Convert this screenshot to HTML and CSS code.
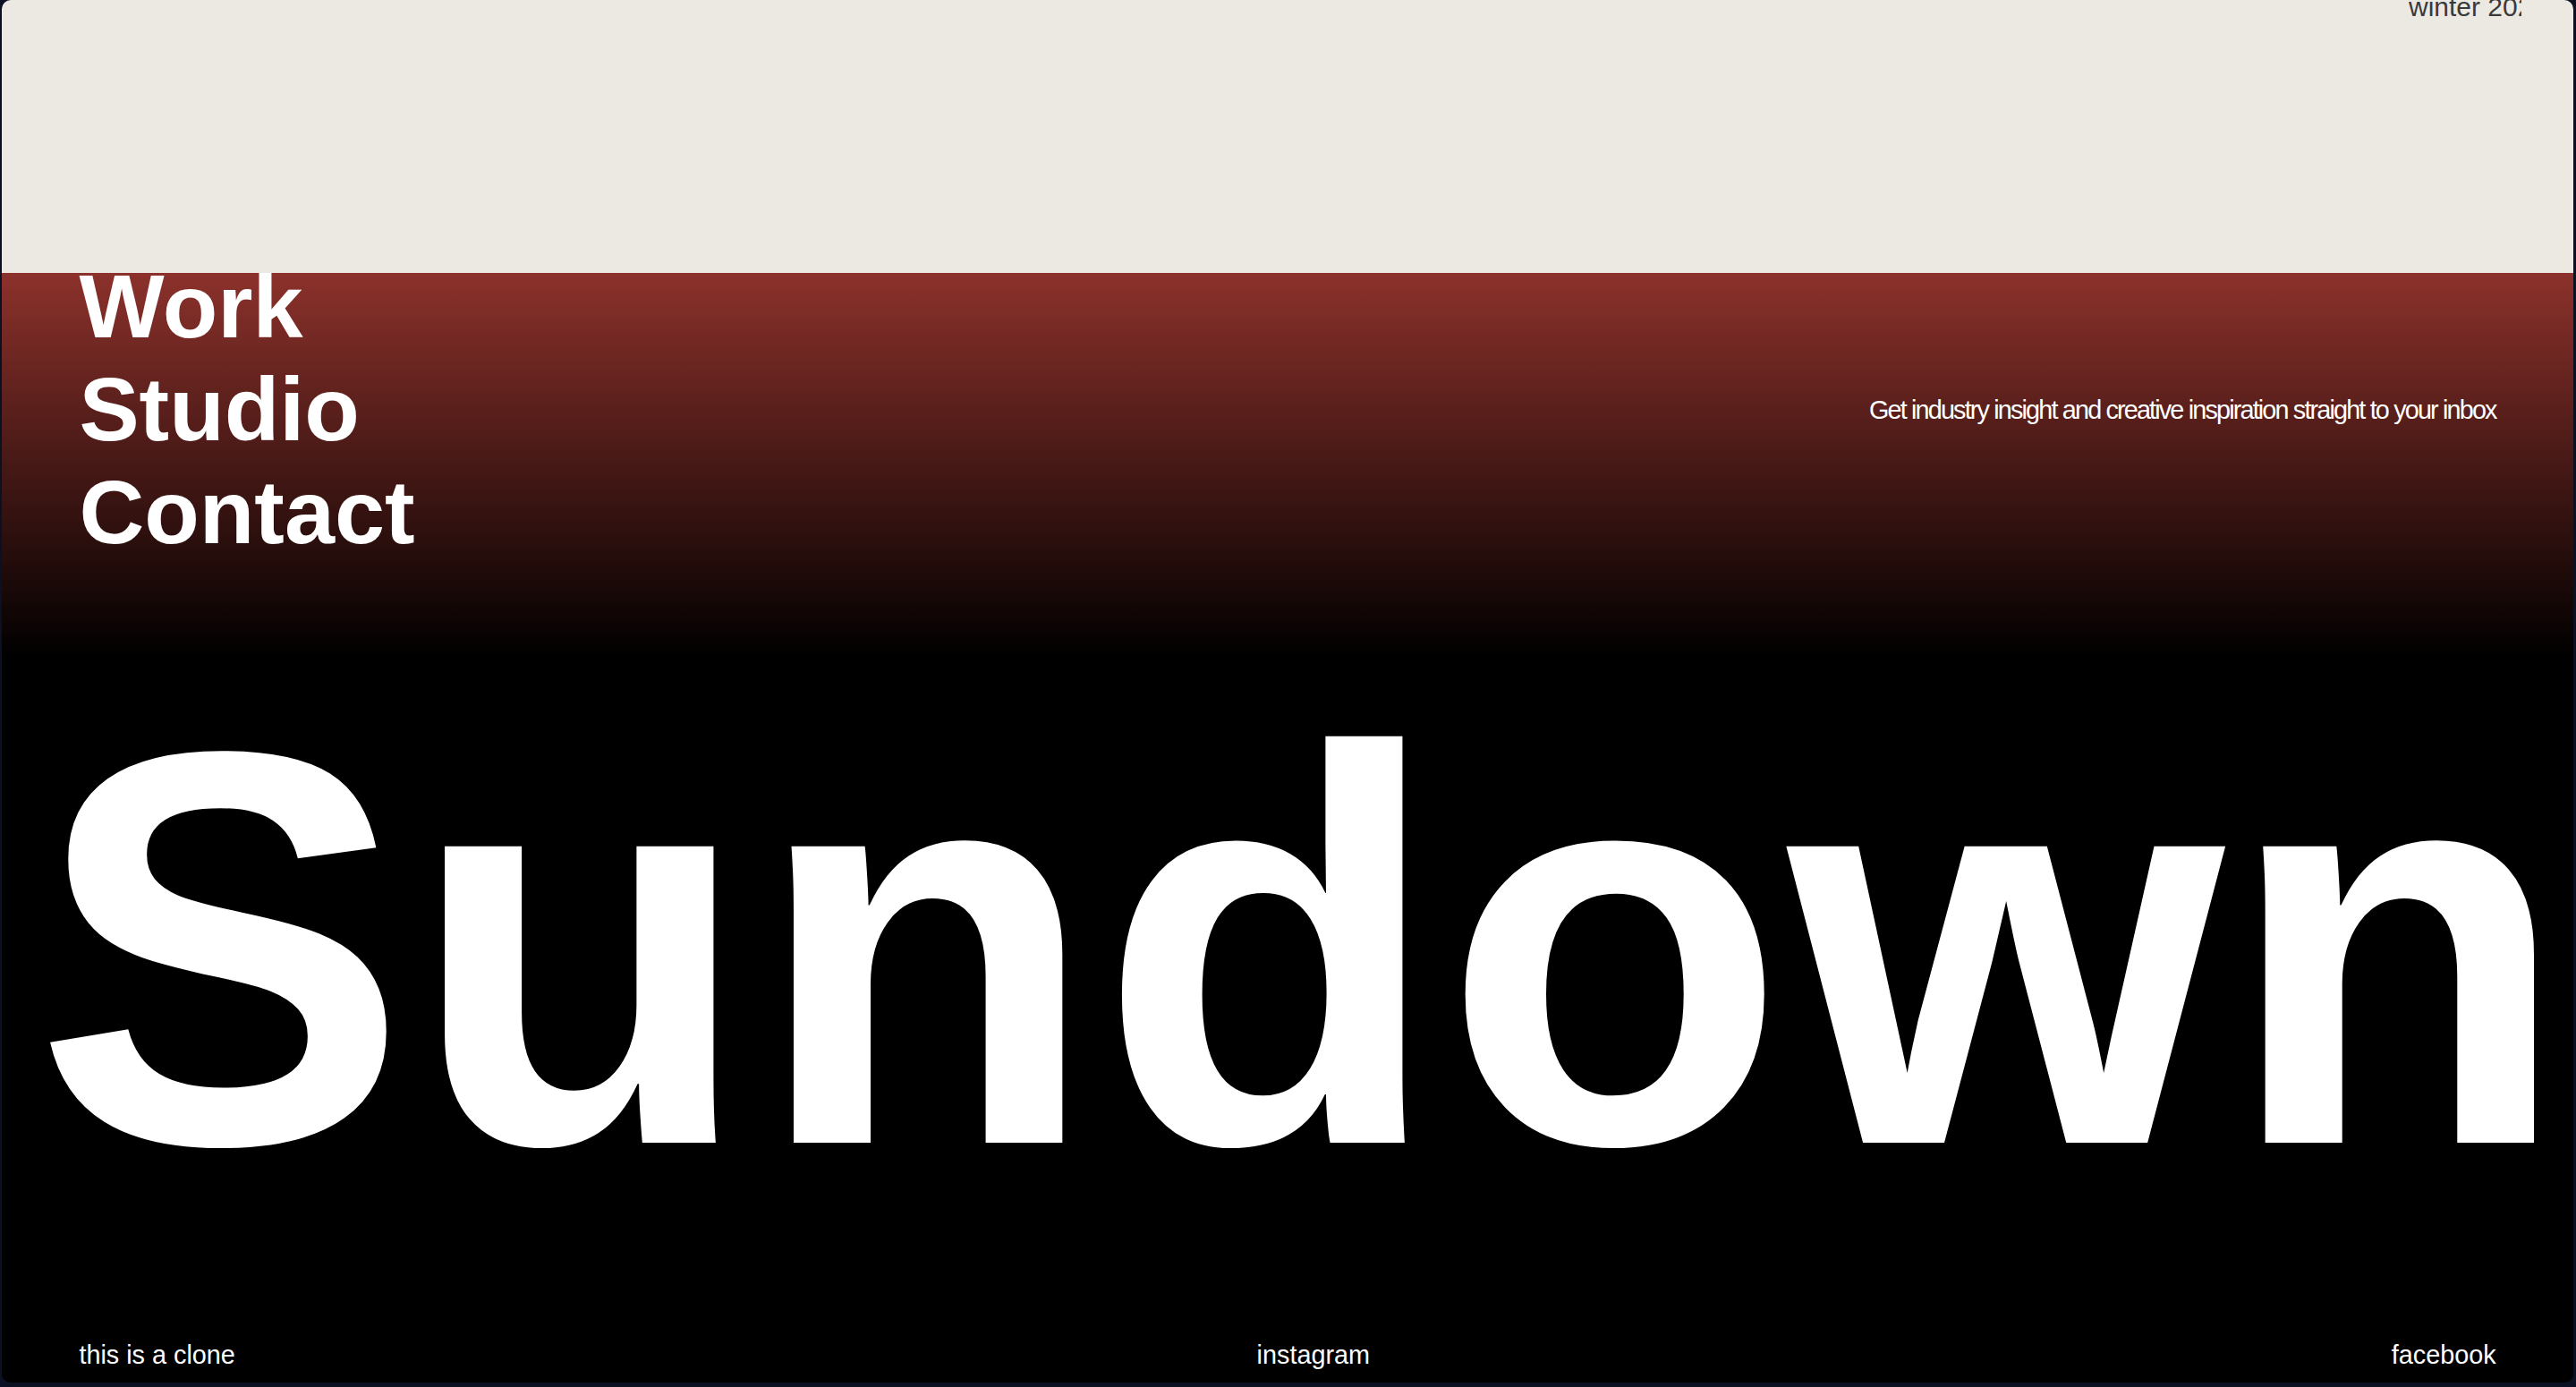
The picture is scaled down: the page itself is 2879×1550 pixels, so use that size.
FILE: index.html
```html
<!DOCTYPE html>
<html lang="en">
<head>
<meta charset="utf-8">
<title>Sundown</title>
<link rel="stylesheet" href="styles.css">
</head>
<body>
<div class="window">
  <header class="header">
    <span class="season">winter 2023</span>
  </header>
  <main class="hero">
    <div class="top-row">
      <nav class="nav">
        <a class="nav-link" href="#">Work</a>
        <a class="nav-link" href="#">Studio</a>
        <a class="nav-link" href="#">Contact</a>
      </nav>
      <p class="tagline">Get industry insight and creative inspiration straight to your inbox</p>
    </div>
    <h1 class="title">Sundown</h1>
    <footer class="footer">
      <span class="foot-item">this is a clone</span>
      <a class="foot-item" href="#">instagram</a>
      <a class="foot-item" href="#">facebook</a>
    </footer>
  </main>
</div>
</body>
</html>
```

FILE: styles.css
```css
html, body {
  margin: 0;
  padding: 0;
}

body {
  width: 2879px;
  height: 1550px;
  overflow: hidden;
  background: #0b1122;
  font-family: "Liberation Sans", Arial, sans-serif;
}

.window {
  margin: 0 3px 5px 2px;
  height: 1545px;
  border-radius: 10px;
  overflow: hidden;
  background: #000;
  display: flex;
  flex-direction: column;
}

.header {
  position: relative;
  z-index: 1;
  height: 305px;
  flex: 0 0 305px;
  background: #ece9e2;
  display: flex;
  justify-content: flex-end;
  align-items: flex-start;
  padding-right: 58px;
}

.season {
  display: block;
  width: 126px;
  margin-top: -9px;
  overflow: hidden;
  white-space: nowrap;
  font-size: 30px;
  color: #3a3a3a;
}

.hero {
  flex: 1;
  display: flex;
  flex-direction: column;
  background: linear-gradient(to bottom, #8c312b 0px, #000 430px, #000 100%);
  color: #fff;
}

.top-row {
  margin-top: -20px;
  padding: 0 86.4px;
  display: flex;
  justify-content: space-between;
  align-items: center;
}

.nav {
  display: flex;
  flex-direction: column;
}

.nav-link {
  color: #fff;
  text-decoration: none;
  font-weight: 700;
  font-size: 100.8px;
  line-height: normal;
}

.tagline {
  margin: 2px 0 0 0;
  font-size: 28.8px;
  letter-spacing: -0.064em;
  color: #fff;
}

.title {
  margin: 116px 0 0 0;
  padding-left: 36px;
  font-size: 627px;
  letter-spacing: 2px;
  line-height: 1;
  font-weight: 700;
  white-space: nowrap;
  color: #fff;
}

.footer {
  margin-top: auto;
  padding: 0 86.4px 14px;
  display: flex;
  justify-content: space-between;
  font-size: 28.8px;
  line-height: normal;
}

.foot-item {
  color: #fff;
  text-decoration: none;
}
```
